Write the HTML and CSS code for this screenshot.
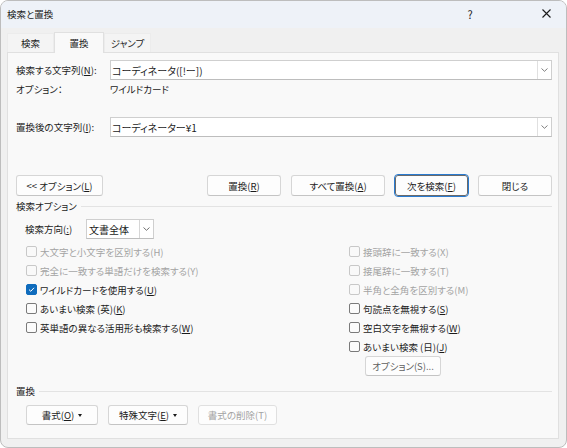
FILE: index.html
```html
<!DOCTYPE html>
<html lang="ja">
<head>
<meta charset="utf-8">
<title>検索と置換</title>
<link rel="stylesheet" href="styles.css">
</head>
<body>
<div class="window">
  <div class="titlebar">
    <span class="title">検索と置換</span>
    <span class="tb-btn help">?</span>
    <span class="tb-btn close">
      <svg width="9" height="9" viewBox="0 0 9 9"><path d="M0.5 0.5 L8.5 8.5 M8.5 0.5 L0.5 8.5" stroke="#1b1b1b" stroke-width="1.1" fill="none"/></svg>
    </span>
  </div>
  <div class="client">
    <div class="tabs">
      <div class="tab">検索</div>
      <div class="tab active">置換</div>
      <div class="tab">ジャンプ</div>
    </div>
    <div class="panel">
      <div class="field-row first">
        <span class="field-label">検索する文字列(<u>N</u>):</span>
        <div class="combo">
          <span class="combo-text">コーディネータ([!ー])</span>
          <span class="combo-arrow"><svg width="7" height="4" viewBox="0 0 7 4"><path d="M0.5 0.5 L3.5 3.3 L6.5 0.5" stroke="#707070" stroke-width="0.9" fill="none"/></svg></span>
        </div>
      </div>
      <div class="info-row">
        <span class="field-label">オプション：</span>
        <span>ワイルドカード</span>
      </div>
      <div class="field-row second">
        <span class="field-label">置換後の文字列(<u>I</u>):</span>
        <div class="combo">
          <span class="combo-text">コーディネーター¥1</span>
          <span class="combo-arrow"><svg width="7" height="4" viewBox="0 0 7 4"><path d="M0.5 0.5 L3.5 3.3 L6.5 0.5" stroke="#707070" stroke-width="0.9" fill="none"/></svg></span>
        </div>
      </div>
      <div class="button-row">
        <button class="btn w-opt">&lt;&lt; オプション(<u>L</u>)</button>
        <button class="btn w-rep push">置換(<u>R</u>)</button>
        <button class="btn w-all">すべて置換(<u>A</u>)</button>
        <button class="btn w-next focused">次を検索(<u>F</u>)</button>
        <button class="btn w-close">閉じる</button>
      </div>
      <div class="group-head g1"><span>検索オプション</span><span class="rule"></span></div>
      <div class="dir-row">
        <span class="dir-label">検索方向(<u>:</u>)</span>
        <div class="select">
          <span class="select-text">文書全体</span>
          <span class="select-arrow"><svg width="7" height="4" viewBox="0 0 7 4"><path d="M0.5 0.5 L3.5 3.3 L6.5 0.5" stroke="#606060" stroke-width="0.9" fill="none"/></svg></span>
        </div>
      </div>
      <div class="options">
        <div class="col left">
          <div class="check disabled"><span class="box"></span>大文字と小文字を区別する(H)</div>
          <div class="check disabled"><span class="box"></span>完全に一致する単語だけを検索する(Y)</div>
          <div class="check"><span class="box checked"><svg width="9" height="9" viewBox="0 0 9 9"><path d="M2 4.6 L3.8 6.3 L7 2.8" stroke="#fff" stroke-width="1" fill="none"/></svg></span>ワイルドカードを使用する(<u>U</u>)</div>
          <div class="check"><span class="box"></span>あいまい検索 (英)(<u>K</u>)</div>
          <div class="check"><span class="box"></span>英単語の異なる活用形も検索する(<u>W</u>)</div>
        </div>
        <div class="col right">
          <div class="check disabled"><span class="box"></span>接頭辞に一致する(X)</div>
          <div class="check disabled"><span class="box"></span>接尾辞に一致する(T)</div>
          <div class="check disabled"><span class="box"></span>半角と全角を区別する(M)</div>
          <div class="check"><span class="box"></span>句読点を無視する(<u>S</u>)</div>
          <div class="check"><span class="box"></span>空白文字を無視する(<u>W</u>)</div>
          <div class="check"><span class="box"></span>あいまい検索 (日)(<u>J</u>)</div>
          <button class="btn w-sub">オプション(S)...</button>
        </div>
      </div>
      <div class="group-head g2"><span>置換</span><span class="rule"></span></div>
      <div class="bottom-row">
        <button class="btn w-fmt">書式(<u>O</u>)<span class="tri"></span></button>
        <button class="btn w-spc">特殊文字(<u>E</u>)<span class="tri"></span></button>
        <button class="btn w-del disabled-btn">書式の削除(T)</button>
      </div>
    </div>
  </div>
</div>
</body>
</html>
```

FILE: styles.css
```css
* { box-sizing: border-box; }
html, body { margin: 0; padding: 0; background: #ffffff; }
body {
  font-family: "Noto Sans CJK JP", "Noto Sans", sans-serif;
  font-size: 9.5px;
  color: #1b1b1b;
  font-feature-settings: "palt";
}
u { text-decoration-thickness: 1px; text-underline-offset: 1px; }

.window {
  width: 567px;
  height: 448px;
  border: 1px solid #bdbdbd;
  border-radius: 8px;
  overflow: hidden;
  background: #f0f0f0;
  display: flex;
  flex-direction: column;
}

.titlebar {
  height: 27px;
  background: #eef2f8;
  display: flex;
  align-items: center;
  padding: 0 0 2px 6px;
  flex: none;
}
.title { font-size: 9.5px; flex: 1; }
.tb-btn {
  width: 40px;
  height: 20px;
  display: flex;
  align-items: center;
  justify-content: center;
}
.help { font-size: 11px; margin-right: 36px; }

.client {
  flex: 1;
  padding: 4px 7px 0 6px;
  display: flex;
  flex-direction: column;
}

.tabs {
  display: flex;
  align-items: flex-end;
  height: 20px;
  position: relative;
  z-index: 1;
}
.tab {
  height: 19px;
  width: 47px;
  display: flex;
  align-items: center;
  justify-content: center;
  background: #f4f4f4;
  border: 1px solid #ececec;
  border-bottom: none;
}
.tab.active {
  width: 50px;
  height: 21px;
  margin-bottom: -1px;
  background: #f9f9f9;
  border-color: #e0e0e0;
}

.panel {
  width: 552px;
  height: 387px;
  background: #f9f9f9;
  border: 1px solid #e0e0e0;
  padding: 0 6px 0 8px;
  display: flex;
  flex-direction: column;
}

.field-row { display: flex; align-items: center; height: 20px; }
.field-row.first { margin-top: 7px; }
.field-row.second { margin-top: 19px; }
.field-label { width: 94px; flex: none; }

.combo {
  flex: 1;
  height: 20px;
  background: #ffffff;
  border: 1px solid #cfcfcf;
  border-bottom-color: #bdbdbd;
  display: flex;
  align-items: center;
}
.combo-text { flex: 1; padding-left: 1px; font-size: 10px; }
.combo-arrow {
  width: 14px;
  height: 18px;
  border-left: 1px solid #e0e0e0;
  display: flex;
  align-items: center;
  justify-content: center;
}

.info-row { display: flex; align-items: center; height: 18px; }

.button-row { display: flex; gap: 10px; margin-top: 38px; height: 21px; }
.btn {
  font-family: inherit;
  font-size: 9.5px;
  font-feature-settings: "palt";
  color: #1b1b1b;
  background: #fdfdfd;
  border: 1px solid #d6d6d6;
  border-bottom-color: #c4c4c4;
  border-radius: 3px;
  padding: 0;
  display: flex;
  align-items: center;
  justify-content: center;
  height: 21px;
}
.push { margin-left: auto; }
.w-opt { width: 87px; }
.w-rep { width: 74px; }
.w-all { width: 94px; }
.w-next { width: 73px; }
.w-close { width: 74px; }
.focused {
  border: 1px solid #6a6a6a;
  outline: 1.5px solid #2a7bd0;
  outline-offset: 0;
}

.group-head { display: flex; align-items: center; height: 14px; }
.group-head .rule { flex: 1; height: 1px; background: #e3e3e3; margin-left: 4px; }
.g1 { margin-top: 3px; }
.g2 { margin-top: 8px; }

.dir-row { display: flex; align-items: center; height: 20px; margin-top: 6px; padding-left: 9px; }
.dir-label { width: 61px; }
.select {
  width: 68px;
  height: 20px;
  background: #ffffff;
  border: 1px solid #cfcfcf;
  border-bottom-color: #bdbdbd;
  display: flex;
  align-items: center;
}
.select-text { flex: 1; padding-left: 2px; font-size: 10px; }
.select-arrow {
  width: 14px;
  height: 18px;
  border-left: 1px solid #d6d6d6;
  display: flex;
  align-items: center;
  justify-content: center;
}

.options { display: flex; margin-top: 3px; }
.col { display: flex; flex-direction: column; }
.col.left { width: 323px; padding-left: 10px; }
.col.right { padding-left: 10px; }
.check { display: flex; align-items: center; height: 19px; white-space: nowrap; }
.check .box {
  width: 11px;
  height: 11px;
  border: 1px solid #7a7a7a;
  border-radius: 2px;
  background: #fbfbfb;
  margin-right: 3px;
  display: flex;
  align-items: center;
  justify-content: center;
  flex: none;
}
.check .box.checked { background: #0f6cbd; border-color: #0f6cbd; }
.check.disabled { color: #a3a3a3; }
.check.disabled .box { border-color: #c8c8c8; background: #f9f9f9; }

.w-sub { width: 76px; height: 20px; margin-left: 16px; color: #5f5f5f; }

.bottom-row { display: flex; margin-top: 7px; padding-left: 10px; }
.bottom-row .btn { height: 20px; margin-right: 10px; }
.w-fmt { width: 72px; }
.w-spc { width: 80px; margin-right: 10px; }
.w-del { width: 79px; }
.disabled-btn { color: #a3a3a3; border-color: #e0e0e0; }
.tri {
  width: 0;
  height: 0;
  border-left: 2.5px solid transparent;
  border-right: 2.5px solid transparent;
  border-top: 3px solid #1b1b1b;
  margin-left: 4px;
}
```
